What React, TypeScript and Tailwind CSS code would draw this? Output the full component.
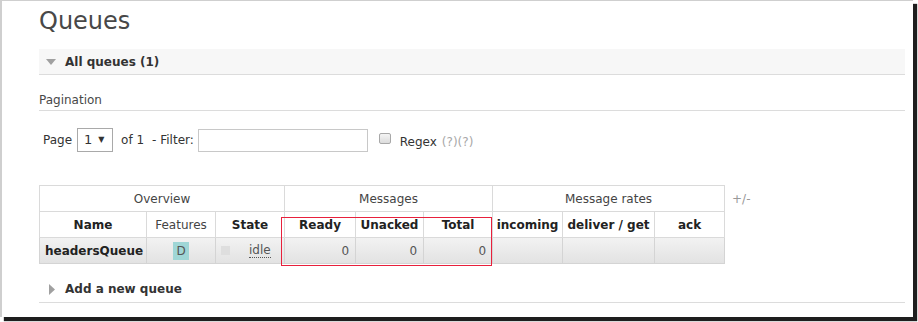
import React from 'react';

const font = { fontFamily: '"DejaVu Sans", Verdana, sans-serif' };

const cols = [107, 69, 69, 71, 68, 69, 70, 92, 70];

const headers = [
  { label: 'Name', bold: true },
  { label: 'Features', bold: false },
  { label: 'State', bold: true },
  { label: 'Ready', bold: true },
  { label: 'Unacked', bold: true },
  { label: 'Total', bold: true },
  { label: 'incoming', bold: true },
  { label: 'deliver / get', bold: true },
  { label: 'ack', bold: true },
];

export default function App() {
  return (
    <div className="w-[918px] h-[322px] bg-white overflow-hidden" style={font}>
      <div className="w-[913px] h-[317px] bg-white border-t border-l-2 border-[#cfcfcf] shadow-[4px_4px_1px_#1e1e1e] pl-[37px] pr-[8px] text-[#444]">
        {/* Title */}
        <h1 className="pt-[6px] text-[24px] leading-[28px] font-normal text-[#484848]">Queues</h1>

        {/* All queues bar */}
        <div className="mt-[14px] h-[26px] bg-[#f7f7f7] border-b border-[#dcdcdc] flex items-center pl-[7px]">
          <svg width="10" height="6" viewBox="0 0 10 6" className="shrink-0">
            <polygon points="0,0 10,0 5,6" fill="#a0a0a0" />
          </svg>
          <span className="ml-[9px] text-[12px] font-bold text-[#333]">All queues (1)</span>
        </div>

        {/* Pagination */}
        <div className="mt-[16px] leading-[18px] pb-[1px] border-b border-[#dcdcdc] text-[12px] text-[#484848]">
          Pagination
        </div>

        <div className="mt-[17px] h-[24px] flex items-center text-[12px] text-[#333]">
          <span className="ml-[4px]">Page</span>
          <div className="ml-[5px] w-[36px] h-[24px] border border-[#a9a9a9] flex items-center pl-[6px] bg-white">
            <span className="text-[13px]">1</span>
            <span className="ml-[6px] text-[8px]">▼</span>
          </div>
          <span className="ml-[8px]">of 1</span>
          <span className="ml-[8px]">- Filter:</span>
          <div className="ml-[4px] w-[170px] h-[23px] border border-[#c8c8c8] bg-white" />
          <div className="ml-[11px] w-[12px] h-[11px] border border-[#a8a8a8] rounded-[2px] bg-gradient-to-b from-[#f4f4f4] to-[#dcdcdc] mt-[-3px]" />
          <span className="ml-[9px] mt-[3px]">Regex</span>
          <span className="ml-[5px] mt-[3px] text-[#a8a8a8]">(?)(?)</span>
        </div>

        {/* Table */}
        <div className="mt-[33px] flex items-start">
          <div className="relative">
            <table className="table-fixed border-collapse text-[12px]" style={{ width: 685 }}>
              <colgroup>
                {cols.map((w, i) => (
                  <col key={i} style={{ width: w }} />
                ))}
              </colgroup>
              <thead>
                <tr>
                  <th colSpan={3} className="h-[26px] p-0 border border-[#dadada] font-normal text-[#444] text-center">
                    Overview
                  </th>
                  <th colSpan={3} className="h-[26px] p-0 border border-[#dadada] font-normal text-[#444] text-center">
                    Messages
                  </th>
                  <th colSpan={3} className="h-[26px] p-0 border border-[#dadada] font-normal text-[#444] text-center">
                    Message rates
                  </th>
                </tr>
                <tr>
                  {headers.map((h) => (
                    <th
                      key={h.label}
                      className={`h-[26px] p-0 border border-[#dadada] text-center whitespace-nowrap ${
                        h.bold ? 'font-bold text-[#222]' : 'font-normal text-[#444]'
                      }`}
                    >
                      {h.label}
                    </th>
                  ))}
                </tr>
              </thead>
              <tbody>
                <tr className="bg-gradient-to-b from-[#f2f2f2] to-[#e2e2e2]">
                  <td className="h-[26px] p-0 pl-[5px] border border-[#d4d4d4] font-bold text-[#222] whitespace-nowrap">
                    headersQueue
                  </td>
                  <td className="h-[26px] p-0 border border-[#d4d4d4] text-center">
                    <span className="inline-flex items-center justify-center w-[16px] h-[18px] bg-[#9fd6d6] text-[#555] align-middle">
                      D
                    </span>
                  </td>
                  <td className="h-[26px] p-0 border border-[#d4d4d4]">
                    <div className="flex items-center">
                      <span className="ml-[5px] w-[9px] h-[9px] bg-[#dedede]" />
                      <span className="ml-[19px] text-[#555] border-b border-dotted border-[#555] leading-[14px]">idle</span>
                    </div>
                  </td>
                  <td className="h-[26px] p-0 pr-[6px] border border-[#d4d4d4] text-right text-[#555]">0</td>
                  <td className="h-[26px] p-0 pr-[6px] border border-[#d4d4d4] text-right text-[#555]">0</td>
                  <td className="h-[26px] p-0 pr-[6px] border border-[#d4d4d4] text-right text-[#555]">0</td>
                  <td className="h-[26px] p-0 border border-[#d4d4d4]" />
                  <td className="h-[26px] p-0 border border-[#d4d4d4]" />
                  <td className="h-[26px] p-0 border border-[#d4d4d4]" />
                </tr>
              </tbody>
            </table>
            {/* highlight box */}
            <div className="absolute left-[242px] top-[32px] w-[211px] h-[49px] bg-transparent outline outline-1 -outline-offset-1 outline-[#e8203c] pointer-events-none" />
          </div>
          <span className="ml-[7px] mt-[5px] text-[12px] text-[#999]">+/-</span>
        </div>

        {/* Add a new queue */}
        <div className="mt-[16px] leading-[18px] pb-[4px] border-b border-[#dcdcdc] flex items-center pl-[10px]">
          <svg width="6" height="11" viewBox="0 0 6 11" className="shrink-0">
            <polygon points="0,0 6,5.5 0,11" fill="#a0a0a0" />
          </svg>
          <span className="ml-[10px] text-[12px] font-bold text-[#333]">Add a new queue</span>
        </div>
      </div>
    </div>
  );
}
